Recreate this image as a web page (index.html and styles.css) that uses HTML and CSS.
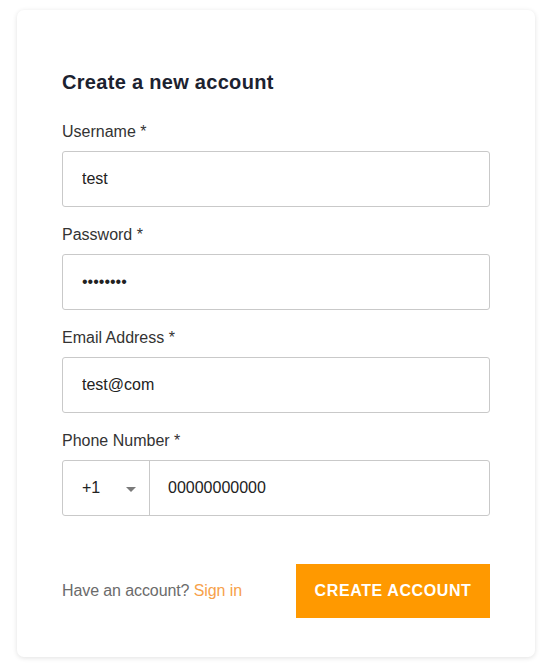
FILE: index.html
```html
<!DOCTYPE html>
<html lang="en">
<head>
<meta charset="utf-8">
<title>Create a new account</title>
<link rel="stylesheet" href="styles.css">
</head>
<body>
<div class="card">
  <h1 class="title">Create a new account</h1>
  <form class="form">
    <div class="field">
      <label class="label" for="u">Username *</label>
      <input class="input" id="u" type="text" value="test">
    </div>
    <div class="field">
      <label class="label" for="p">Password *</label>
      <input class="input" id="p" type="password" value="12345678">
    </div>
    <div class="field">
      <label class="label" for="e">Email Address *</label>
      <input class="input" id="e" type="text" value="test@com">
    </div>
    <div class="field field-last">
      <label class="label" for="ph">Phone Number *</label>
      <div class="phone">
        <div class="code">
          <span>+1</span>
          <span class="caret"></span>
        </div>
        <input class="phone-input" id="ph" type="text" value="00000000000">
      </div>
    </div>
    <div class="footer">
      <span class="have">Have an account? <a class="signin" href="#">Sign in</a></span>
      <button class="btn" type="button">CREATE ACCOUNT</button>
    </div>
  </form>
</div>
</body>
</html>
```
FILE: styles.css
```css
* { box-sizing: border-box; }
html, body { margin: 0; background: #ffffff; }
body {
  font-family: "Liberation Sans", Arial, sans-serif;
  padding: 10px 21px 10px 17px;
}
.card {
  width: 518px;
  background: #fff;
  border-radius: 7px;
  box-shadow: 0 1px 5px rgba(0,0,0,0.12);
  padding: 60px 45px 39px 45px;
}
.title {
  margin: 0 0 28px 0;
  font-size: 20px;
  line-height: 24px;
  font-weight: bold;
  letter-spacing: 0.3px;
  color: #1c2230;
}
.form { display: flex; flex-direction: column; }
.field { display: flex; flex-direction: column; margin-bottom: 18px; }
.field-last { margin-bottom: 0; }
.label {
  font-size: 16px;
  line-height: 20px;
  color: #333;
  margin-bottom: 9px;
}
.input {
  height: 56px;
  width: 100%;
  border: 1px solid #c9c9c9;
  border-radius: 3px;
  padding: 0 19px;
  font-family: inherit;
  font-size: 16px;
  color: #222;
  background: #fff;
  outline: none;
}
.phone {
  display: flex;
  height: 56px;
  border: 1px solid #c9c9c9;
  border-radius: 3px;
}
.code {
  width: 87px;
  border-right: 1px solid #c9c9c9;
  display: flex;
  align-items: center;
  justify-content: space-between;
  padding: 0 13px 0 19px;
  font-size: 16px;
  color: #222;
}
.caret {
  width: 0; height: 0;
  border-left: 5px solid transparent;
  border-right: 5px solid transparent;
  border-top: 5px solid #7a7a7a;
  margin-top: 2px;
}
.phone-input {
  flex: 1;
  min-width: 0;
  border: none;
  outline: none;
  padding: 0 18px;
  font-family: inherit;
  font-size: 16px;
  color: #222;
  background: transparent;
}
.footer {
  display: flex;
  align-items: center;
  justify-content: space-between;
  margin-top: 48px;
}
.have { font-size: 16px; color: #6b6b6b; letter-spacing: -0.1px; }
.signin { color: #f7a14a; text-decoration: none; }
.btn {
  width: 194px;
  height: 54px;
  background: #ff9900;
  border: none;
  border-radius: 0;
  color: #fff;
  font-family: inherit;
  font-size: 16px;
  font-weight: bold;
  letter-spacing: 0.6px;
  padding: 0;
}
```
